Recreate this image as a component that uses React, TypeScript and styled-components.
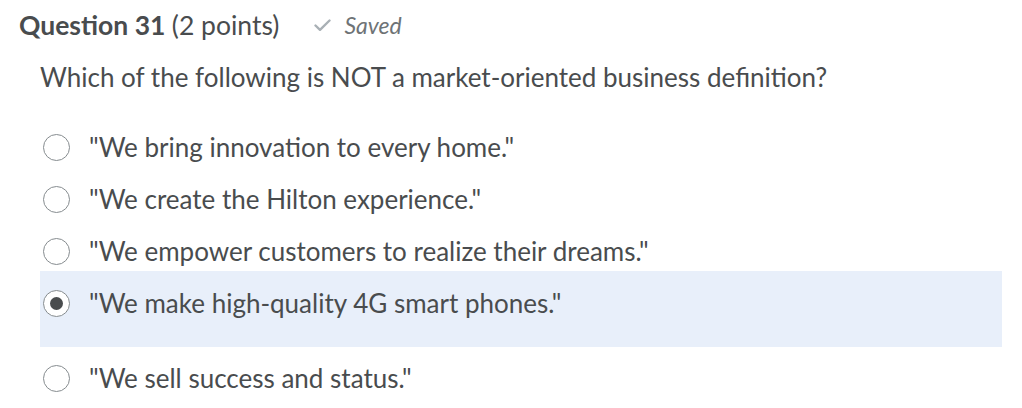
import React from 'react';
import styled, { createGlobalStyle } from 'styled-components';

const GlobalStyle = createGlobalStyle`
  body {
    margin: 0;
    background: #fff;
    font-family: Lato, "Open Sans", sans-serif;
    color: #494c4e;
  }
`;

const Page = styled.div`
  width: 1022px;
  height: 408px;
  overflow: hidden;
  padding: 7px 20px 0 19px;
  box-sizing: border-box;
`;

const Header = styled.div`
  display: flex;
  align-items: center;
  height: 36px;
`;

const Title = styled.h2`
  margin: 0;
  font-size: 26.5px;
  font-weight: 700;
  span {
    font-weight: 400;
  }
`;

const SavedTag = styled.div`
  display: flex;
  align-items: center;
  gap: 13px;
  margin-left: 35px;
  font-size: 23px;
  font-style: italic;
  color: #6e7376;
`;

const Body = styled.div`
  padding-left: 21px;
`;

const Prompt = styled.p`
  margin: 19px 0 0;
  font-size: 26px;
  line-height: 30px;
`;

const Options = styled.div`
  display: flex;
  flex-direction: column;
  margin-top: 29px;
`;

const Option = styled.label<{ $selected?: boolean }>`
  display: flex;
  align-items: flex-start;
  gap: 19px;
  padding: ${p => (p.$selected ? '17px 3px 29px' : '11px 3px')};
  margin: ${p => (p.$selected ? '-6px 0 5px' : '0')};
  background: ${p => (p.$selected ? '#e8effa' : 'transparent')};
  font-size: 26px;
  line-height: 30px;
`;

const Radio = styled.span<{ $checked?: boolean }>`
  flex: none;
  width: 27px;
  height: 27px;
  margin-top: 2px;
  box-sizing: border-box;
  border: 1.5px solid #868c8f;
  border-radius: 50%;
  background: #fff;
  display: flex;
  align-items: center;
  justify-content: center;
  &::after {
    content: '';
    display: ${p => (p.$checked ? 'block' : 'none')};
    width: 13px;
    height: 13px;
    border-radius: 50%;
    background: #494c4e;
  }
`;

const options = [
  '"We bring innovation to every home."',
  '"We create the Hilton experience."',
  '"We empower customers to realize their dreams."',
  '"We make high-quality 4G smart phones."',
  '"We sell success and status."',
];

export default function App() {
  return (
    <>
      <GlobalStyle />
      <Page>
        <Header>
          <Title>
            Question 31 <span>(2 points)</span>
          </Title>
          <SavedTag>
            <svg width="17" height="13" viewBox="0 0 17 13">
              <path d="M1.5 6.5 L6 10.8 L15.5 1.5" fill="none" stroke="#a9b0b5" strokeWidth="2.4" strokeLinecap="round" strokeLinejoin="round" />
            </svg>
            Saved
          </SavedTag>
        </Header>
        <Body>
          <Prompt>Which of the following is NOT a market-oriented business definition?</Prompt>
          <Options>
            {options.map((o, i) => (
              <Option key={i} $selected={i === 3}>
                <Radio $checked={i === 3} />
                {o}
              </Option>
            ))}
          </Options>
        </Body>
      </Page>
    </>
  );
}
